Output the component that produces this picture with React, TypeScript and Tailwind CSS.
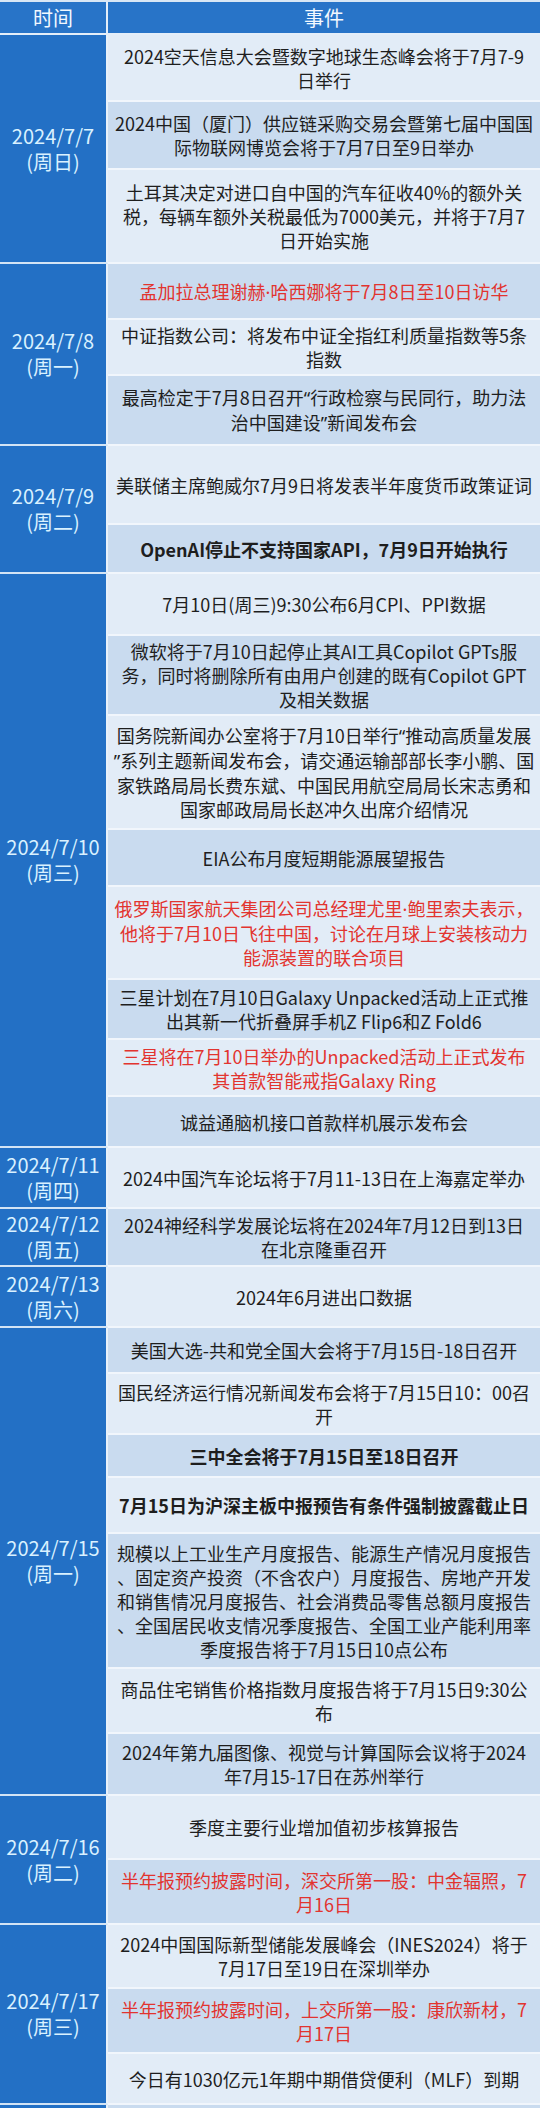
import React from "react";

type Row = { lines: string[]; h: number; red?: boolean; bold?: boolean };
type Group = { date: string; week: string; rows: Row[] };

const groups: Group[] = [
  {
    date: "2024/7/7",
    week: "(周日)",
    rows: [
      { lines: ["2024空天信息大会暨数字地球生态峰会将于7月7-9", "日举行"], h: 67 },
      { lines: ["2024中国（厦门）供应链采购交易会暨第七届中国国", "际物联网博览会将于7月7日至9日举办"], h: 68 },
      {
        lines: [
          "土耳其决定对进口自中国的汽车征收40%的额外关",
          "税，每辆车额外关税最低为7000美元，并将于7月7",
          "日开始实施",
        ],
        h: 94,
      },
    ],
  },
  {
    date: "2024/7/8",
    week: "(周一)",
    rows: [
      { lines: ["孟加拉总理谢赫·哈西娜将于7月8日至10日访华"], h: 56, red: true },
      { lines: ["中证指数公司：将发布中证全指红利质量指数等5条", "指数"], h: 56 },
      { lines: ["最高检定于7月8日召开“行政检察与民同行，助力法", "治中国建设”新闻发布会"], h: 70 },
    ],
  },
  {
    date: "2024/7/9",
    week: "(周二)",
    rows: [
      { lines: ["美联储主席鲍威尔7月9日将发表半年度货币政策证词"], h: 79 },
      { lines: ["OpenAI停止不支持国家API，7月9日开始执行"], h: 49, bold: true },
    ],
  },
  {
    date: "2024/7/10",
    week: "(周三)",
    rows: [
      { lines: ["7月10日(周三)9:30公布6月CPI、PPI数据"], h: 62 },
      {
        lines: [
          "微软将于7月10日起停止其AI工具Copilot GPTs服",
          "务，同时将删除所有由用户创建的既有Copilot GPT",
          "及相关数据",
        ],
        h: 80,
      },
      {
        lines: [
          "国务院新闻办公室将于7月10日举行“推动高质量发展",
          "”系列主题新闻发布会，请交通运输部部长李小鹏、国",
          "家铁路局局长费东斌、中国民用航空局局长宋志勇和",
          "国家邮政局局长赵冲久出席介绍情况",
        ],
        h: 114,
      },
      { lines: ["EIA公布月度短期能源展望报告"], h: 57 },
      {
        lines: [
          "俄罗斯国家航天集团公司总经理尤里·鲍里索夫表示，",
          "他将于7月10日飞往中国，讨论在月球上安装核动力",
          "能源装置的联合项目",
        ],
        h: 93,
        red: true,
      },
      { lines: ["三星计划在7月10日Galaxy Unpacked活动上正式推", "出其新一代折叠屏手机Z Flip6和Z Fold6"], h: 60 },
      { lines: ["三星将在7月10日举办的Unpacked活动上正式发布", "其首款智能戒指Galaxy Ring"], h: 57, red: true },
      { lines: ["诚益通脑机接口首款样机展示发布会"], h: 51 },
    ],
  },
  {
    date: "2024/7/11",
    week: "(周四)",
    rows: [{ lines: ["2024中国汽车论坛将于7月11-13日在上海嘉定举办"], h: 61 }],
  },
  {
    date: "2024/7/12",
    week: "(周五)",
    rows: [{ lines: ["2024神经科学发展论坛将在2024年7月12日到13日", "在北京隆重召开"], h: 58 }],
  },
  {
    date: "2024/7/13",
    week: "(周六)",
    rows: [{ lines: ["2024年6月进出口数据"], h: 61 }],
  },
  {
    date: "2024/7/15",
    week: "(周一)",
    rows: [
      { lines: ["美国大选-共和党全国大会将于7月15日-18日召开"], h: 46 },
      { lines: ["国民经济运行情况新闻发布会将于7月15日10：00召", "开"], h: 61 },
      { lines: ["三中全会将于7月15日至18日召开"], h: 43, bold: true },
      { lines: ["7月15日为沪深主板中报预告有条件强制披露截止日"], h: 56, bold: true },
      {
        lines: [
          "规模以上工业生产月度报告、能源生产情况月度报告",
          "、固定资产投资（不含农户）月度报告、房地产开发",
          "和销售情况月度报告、社会消费品零售总额月度报告",
          "、全国居民收支情况季度报告、全国工业产能利用率",
          "季度报告将于7月15日10点公布",
        ],
        h: 135,
      },
      { lines: ["商品住宅销售价格指数月度报告将于7月15日9:30公", "布"], h: 65 },
      { lines: ["2024年第九届图像、视觉与计算国际会议将于2024", "年7月15-17日在苏州举行"], h: 62 },
    ],
  },
  {
    date: "2024/7/16",
    week: "(周二)",
    rows: [
      { lines: ["季度主要行业增加值初步核算报告"], h: 64 },
      { lines: ["半年报预约披露时间，深交所第一股：中金辐照，7", "月16日"], h: 65, red: true },
    ],
  },
  {
    date: "2024/7/17",
    week: "(周三)",
    rows: [
      { lines: ["2024中国国际新型储能发展峰会（INES2024）将于", "7月17日至19日在深圳举办"], h: 64 },
      { lines: ["半年报预约披露时间，上交所第一股：康欣新材，7", "月17日"], h: 65, red: true },
      { lines: ["今日有1030亿元1年期中期借贷便利（MLF）到期"], h: 51 },
    ],
  },
];

function Line({ text }: { text: string }) {
  const parts = text.split(/([“”·])/);
  return (
    <div className="whitespace-nowrap">
      {parts.map((p, i) =>
        p === "“" || p === "”" || p === "·" ? (
          <span key={i} className="font-['Noto_Sans',sans-serif]">
            {p}
          </span>
        ) : (
          <React.Fragment key={i}>{p}</React.Fragment>
        )
      )}
    </div>
  );
}

export default function App() {
  let idx = 0;
  return (
    <div className="w-[540px] overflow-hidden bg-[#e2ecf7] font-['Noto_Sans_CJK_SC','Noto_Sans',sans-serif]">
      <div className="h-[2px] bg-[#d9e7f5]" />
      <div className="flex h-[33px] border-b-2 border-[#e4eef9] bg-[#2874c8] text-[20px] text-[#f2f8ff]">
        <div className="flex w-[108px] shrink-0 items-center justify-center border-r-2 border-[#e4eef9]">时间</div>
        <div className="flex flex-1 items-center justify-center">事件</div>
      </div>
      {groups.map((g) => (
        <div key={g.date} className="flex">
          <div className="flex w-[108px] shrink-0 flex-col items-center justify-center border-b-2 border-r-2 border-b-[#d3e4f5] border-r-[#e8f1fa] bg-[#2370c5] text-[20px] leading-[26px] text-[#d9f1ff]">
            <div>{g.date}</div>
            <div>{g.week}</div>
          </div>
          <div className="flex flex-1 flex-col">
            {g.rows.map((r, i) => {
              const dark = idx % 2 === 1;
              idx++;
              return (
                <div
                  key={i}
                  style={{ height: r.h }}
                  className={
                    "flex flex-col items-center justify-center border-b-2 border-[#f1f6fc] px-1 text-center text-[18px] leading-[24px] " +
                    (dark ? "bg-[#c9dbef] " : "bg-[#e2ecf7] ") +
                    (r.red ? "text-[#e2342f] " : "text-[#1e1e1e] ") +
                    (r.bold ? "font-bold" : "font-normal")
                  }
                >
                  {r.lines.map((l, j) => (
                    <Line key={j} text={l} />
                  ))}
                </div>
              );
            })}
          </div>
        </div>
      ))}
      <div className="flex h-[40px]">
        <div className="w-[108px] shrink-0 border-r-2 border-[#e8f1fa] bg-[#2370c5]" />
        <div className="flex-1 bg-[#c9dbef]" />
      </div>
    </div>
  );
}
